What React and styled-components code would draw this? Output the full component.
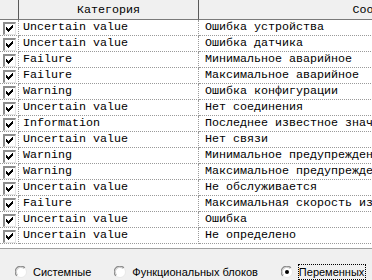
import React from "react";
import styled, { createGlobalStyle } from "styled-components";

const Global = createGlobalStyle`
  html, body { margin: 0; padding: 0; background: #f0f0f0; }
  body { width: 372px; height: 280px; overflow: hidden; }
`;

const Frame = styled.div`
  width: 372px;
  height: 280px;
  overflow: hidden;
  display: flex;
  flex-direction: column;
  background: #f0f0f0;
`;

const ListView = styled.div`
  height: 248px;
  flex: none;
  background: #fff;
  border-bottom: 1px solid #a0a0a0;
  overflow: hidden;
`;

const Grid = styled.div`
  display: grid;
  grid-template-columns: 19px 180px 370px;
  grid-template-rows: 20px;
  grid-auto-rows: 16px;
  width: 569px;
  font-family: "Liberation Mono", "Courier New", monospace;
  font-size: 11.67px;
  color: #000;
`;

const HeadCell = styled.div`
  height: 20px;
  box-sizing: border-box;
  background: #f0f0f0;
  border-bottom: 1px solid #7a7a7a;
  border-right: ${(p) => (p.$last ? "none" : "1px solid #5a5a5a")};
  display: flex;
  align-items: center;
  justify-content: center;
  white-space: nowrap;
  overflow: hidden;
`;

const Cell = styled.div`
  box-sizing: border-box;
  height: 16px;
  border-bottom: 1px dotted #9a9a9a;
  border-right: ${(p) => (p.$last ? "none" : "1px dotted #9a9a9a")};
  display: flex;
  align-items: center;
  padding-left: ${(p) => p.$pad || 0}px;
  white-space: nowrap;
  overflow: hidden;
  line-height: 15px;
`;

const CheckBox = styled.span`
  width: 13px;
  height: 13px;
  box-sizing: border-box;
  margin-left: 3px;
  margin-top: 1px;
  display: block;
  flex: none;
  background: #fff;
  border-style: solid;
  border-width: 2px 1px 1px 2px;
  border-color: #8c8c8c #e4e4e4 #e4e4e4 #8c8c8c;
  position: relative;
`;

const CheckSvg = styled.svg`
  position: absolute;
  left: -2px;
  top: -2px;
  display: block;
`;

const Check = () => (
  <CheckBox>
    <CheckSvg width="13" height="13" viewBox="0 0 13 13" shapeRendering="crispEdges">
      {[
        [3, 5],
        [4, 6],
        [5, 7],
        [6, 6],
        [7, 5],
        [8, 4],
        [9, 3],
      ].map(([x, y]) => (
        <rect key={x} x={x} y={y} width="1" height="3" fill="#000" />
      ))}
    </CheckSvg>
  </CheckBox>
);

const RadioBar = styled.div`
  display: flex;
  gap: 21px;
  padding: 15px 0 0 15px;
  font-family: "Liberation Sans", Arial, sans-serif;
  font-size: 11px;
  color: #000;
`;

const RadioItem = styled.label`
  display: flex;
  align-items: center;
  height: 16px;
  white-space: nowrap;
`;

const RadioSvg = styled.svg`
  display: block;
  flex: none;
  margin-right: ${(p) => (p.$focus ? 5 : 6)}px;
`;

const RadioText = styled.span`
  display: block;
  line-height: 14px;
  border: 1px dotted ${(p) => (p.$focus ? "#000" : "transparent")};
  padding: 0 1px 0 0;
  margin-left: ${(p) => (p.$focus ? 0 : -1)}px;
`;

const Radio = ({ label, checked }) => (
  <RadioItem>
    <RadioSvg width="12" height="12" viewBox="0 0 12 12" $focus={checked}>
      <circle cx="6" cy="6" r="5.5" fill="#fff" stroke="#e8e8e8" />
      <path d="M1.8 9.9 A5.5 5.5 0 0 1 9.9 1.8" fill="none" stroke="#8c8c8c" strokeWidth="1.2" />
      <path d="M2.7 8.9 A4.3 4.3 0 0 1 8.9 2.7" fill="none" stroke="#c8c8c8" strokeWidth="1" />
      {checked && <circle cx="6" cy="6" r="2" fill="#000" />}
    </RadioSvg>
    <RadioText $focus={checked}>{label}</RadioText>
  </RadioItem>
);

const rows = [
  ["Uncertain value", "Ошибка устройства"],
  ["Uncertain value", "Ошибка датчика"],
  ["Failure", "Минимальное аварийное"],
  ["Failure", "Максимальное аварийное"],
  ["Warning", "Ошибка конфигурации"],
  ["Uncertain value", "Нет соединения"],
  ["Information", "Последнее известное значение"],
  ["Uncertain value", "Нет связи"],
  ["Warning", "Минимальное предупреждение"],
  ["Warning", "Максимальное предупреждение"],
  ["Uncertain value", "Не обслуживается"],
  ["Failure", "Максимальная скорость изменения"],
  ["Uncertain value", "Ошибка"],
  ["Uncertain value", "Не определено"],
];

export default function App() {
  return (
    <Frame>
      <Global />
      <ListView>
        <Grid>
          <HeadCell />
          <HeadCell>Категория</HeadCell>
          <HeadCell $last>Сообщение</HeadCell>
          {rows.map(([cat, msg], i) => (
            <React.Fragment key={i}>
              <Cell>
                <Check />
              </Cell>
              <Cell $pad={4}>{cat}</Cell>
              <Cell $pad={6} $last>
                {msg}
              </Cell>
            </React.Fragment>
          ))}
        </Grid>
      </ListView>
      <RadioBar>
        <Radio label="Системные" />
        <Radio label="Функциональных блоков" />
        <Radio label="Переменных" checked />
      </RadioBar>
    </Frame>
  );
}
